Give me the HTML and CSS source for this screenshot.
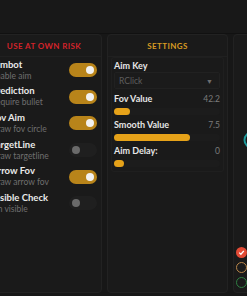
FILE: index.html
```html
<!DOCTYPE html>
<html>
<head>
<meta charset="utf-8">
<link rel="stylesheet" href="styles.css">
</head>
<body>
<div class="top"></div>
<div class="panels">
  <section class="panel panel-left">
    <div class="head risk">USE AT OWN RISK</div>
    <div class="rows">
      <div class="row"><div class="txt"><div class="t">Aimbot</div><div class="s">Enable aim</div></div><span class="tog on"></span></div>
      <div class="row"><div class="txt"><div class="t">Prediction</div><div class="s">Require bullet</div></div><span class="tog on"></span></div>
      <div class="row"><div class="txt"><div class="t">Fov Aim</div><div class="s">Draw fov circle</div></div><span class="tog on"></span></div>
      <div class="row"><div class="txt"><div class="t">TargetLine</div><div class="s">Draw targetline</div></div><span class="tog"></span></div>
      <div class="row"><div class="txt"><div class="t">Arrow Fov</div><div class="s">Draw arrow fov</div></div><span class="tog on"></span></div>
      <div class="row"><div class="txt"><div class="t">Visible Check</div><div class="s">On visible</div></div><span class="tog"></span></div>
    </div>
  </section>
  <section class="panel panel-mid">
    <div class="head settings">SETTINGS</div>
    <div class="box">
      <div class="lbl">Aim Key</div>
      <div class="select"><span>RClick</span><span class="arrow">▼</span></div>
      <div class="lbl gap"><span>Fov Value</span><span class="val">42.2</span></div>
      <div class="track"><div class="fill" style="width:15%"></div></div>
      <div class="lbl gap"><span>Smooth Value</span><span class="val">7.5</span></div>
      <div class="track"><div class="fill" style="width:72%"></div></div>
      <div class="lbl gap"><span>Aim Delay:</span><span class="val">0</span></div>
      <div class="track"><div class="fill" style="width:9%"></div></div>
    </div>
  </section>
  <section class="panel panel-right">
    <svg class="arc" width="8" height="18" viewBox="0 0 8 18"><circle cx="9" cy="9" r="7.5" fill="none" stroke="#1f9a9c" stroke-width="2"/></svg>
    <div class="checks">
      <span class="chk red"><svg width="7" height="7" viewBox="0 0 7 7"><path d="M1.2 3.6 L2.9 5.2 L5.8 1.8" fill="none" stroke="#fff" stroke-width="1.3"/></svg></span>
      <span class="chk orange"></span>
      <span class="chk green"></span>
    </div>
  </section>
</div>
</body>
</html>
```
FILE: styles.css
```css
* { box-sizing: border-box; }
html, body { margin: 0; padding: 0; }
body {
  width: 247px;
  height: 296px;
  overflow: hidden;
  background: #171717;
  font-family: Lato, "Open Sans", sans-serif;
}
.top {
  height: 34px;
  background: #181818;
  border-bottom: 1px solid #111;
}
.panels {
  display: flex;
  gap: 5px;
  margin-left: -20px;
  height: 259px;
}
.panel {
  flex: none;
  background: #1a1a1a;
  border: 1px solid #222;
  border-radius: 4px;
}
.panel-left { width: 122px; }
.panel-mid { width: 121px; }
.panel-right { width: 60px; padding-left: 2px; }
.head {
  height: 22px;
  line-height: 22px;
  text-align: center;
  font-size: 8px;
  font-weight: 700;
  letter-spacing: 0.4px;
  border-bottom: 1px solid #202020;
}
.risk { color: #d3232a; padding-left: 6px; }
.settings { color: #d79a22; }
.rows { padding: 0 4px 0 10px; }
.row {
  height: 26.6px;
  display: flex;
  align-items: center;
  justify-content: space-between;
}
.t {
  color: #e9e9e9;
  font-size: 9.5px;
  font-weight: 700;
  line-height: 11px;
}
.s {
  color: #6f6f6f;
  font-size: 8.5px;
  line-height: 11px;
  margin-top: 1px;
}
.tog {
  width: 28px;
  height: 14px;
  border-radius: 7px;
  background: #1f1f1f;
  position: relative;
  flex: none;
}
.tog::after {
  content: "";
  position: absolute;
  top: 3px;
  left: 3px;
  width: 8px;
  height: 8px;
  border-radius: 50%;
  background: #6a6a6a;
}
.tog.on { background: #b8841a; }
.tog.on::after { left: 17px; background: #f2f2f2; }
.box {
  margin: 0 3px 0 3px;
  padding: 3px 3px 4px 2px;
  border: 1px solid #1f1f1f;
  border-radius: 3px;
}
.lbl {
  display: flex;
  justify-content: space-between;
  color: #e6e6e6;
  font-size: 9px;
  font-weight: 700;
  line-height: 10px;
}
.lbl.gap { margin-top: 5px; }
.val {
  color: #7a7a7a;
  font-weight: 400;
  font-size: 8.5px;
}
.select {
  margin-top: 1px;
  height: 17px;
  border: 1px solid #212121;
  background: #1b1b1b;
  border-radius: 2px;
  display: flex;
  align-items: center;
  justify-content: space-between;
  padding: 0 6px 0 4px;
  color: #5e5e5e;
  font-size: 8.5px;
}
.arrow { font-size: 7px; color: #6e6e6e; }
.track {
  margin-top: 4px;
  height: 7px;
  border-radius: 4px;
  background: #1c1c1c;
}
.fill {
  height: 100%;
  border-radius: 4px;
  background: #e6a219;
}
.arc { display: block; margin-top: 96px; margin-left: 7px; }
.checks {
  margin-top: 98px;
  display: flex;
  flex-direction: column;
  gap: 4px;
}
.chk {
  width: 11px;
  height: 11px;
  border-radius: 50%;
  display: flex;
  align-items: center;
  justify-content: center;
}
.chk.red { background: #e24a35; }
.chk.orange { border: 1.5px solid #b8864a; }
.chk.green { border: 1.5px solid #2f7f42; }
```
